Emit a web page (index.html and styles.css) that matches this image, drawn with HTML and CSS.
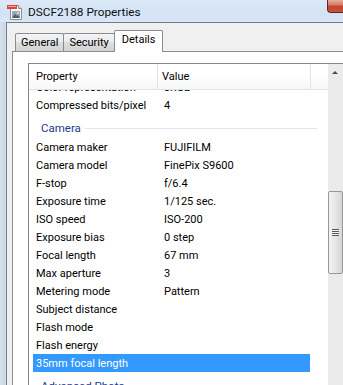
FILE: index.html
```html
<!DOCTYPE html>
<html>
<head>
<meta charset="utf-8">
<link rel="stylesheet" href="styles.css">
</head>
<body>
<div class="window">
  <div class="titlebar">
    <svg class="app-icon" width="16" height="16" viewBox="0 0 16 16">
      <path d="M3.5 1.5h8l3 3v11h-11z" fill="#fafafa" stroke="#8c8c8c"/>
      <path d="M11.5 1.5v3h3" fill="#e6e6e6" stroke="#8c8c8c"/>
      <rect x="0" y="1" width="10" height="4" fill="#d9463c"/>
      <rect x="1" y="2" width="8" height="1" fill="#f4a29a"/>
      <rect x="5" y="7" width="8" height="7" fill="#9aa6b2"/>
      <path d="M5 14l3-4 2 2 1-1 2 3z" fill="#4f5f6f"/>
      <circle cx="11" cy="9" r="1" fill="#e8e8e8"/>
    </svg>
    <span class="title">DSCF2188 Properties</span>
    <div class="close"></div>
  </div>
  <div class="frame">
    <div class="client">
      <div class="tabs">
        <div class="tab">General</div>
        <div class="tab">Security</div>
        <div class="tab active">Details</div>
      </div>
      <div class="panel">
        <div class="listview">
          <div class="lv-main">
            <div class="lv-header">
              <div class="hcell col-prop">Property</div>
              <div class="hcell col-val">Value</div>
              <div class="hcell col-rest"></div>
            </div>
            <div class="lv-body">
              <div class="lv-rows">
                <div class="row"><span class="c1">Color representation</span><span class="c2">sRGB</span></div>
                <div class="row"><span class="c1">Compressed bits/pixel</span><span class="c2">4</span></div>
                <div class="group"><span class="group-name">Camera</span><span class="group-line"></span></div>
                <div class="row"><span class="c1">Camera maker</span><span class="c2">FUJIFILM</span></div>
                <div class="row"><span class="c1">Camera model</span><span class="c2">FinePix S9600</span></div>
                <div class="row"><span class="c1">F-stop</span><span class="c2">f/6.4</span></div>
                <div class="row"><span class="c1">Exposure time</span><span class="c2">1/125 sec.</span></div>
                <div class="row"><span class="c1">ISO speed</span><span class="c2">ISO-200</span></div>
                <div class="row"><span class="c1">Exposure bias</span><span class="c2">0 step</span></div>
                <div class="row"><span class="c1">Focal length</span><span class="c2">67 mm</span></div>
                <div class="row"><span class="c1">Max aperture</span><span class="c2">3</span></div>
                <div class="row"><span class="c1">Metering mode</span><span class="c2">Pattern</span></div>
                <div class="row"><span class="c1">Subject distance</span><span class="c2"></span></div>
                <div class="row"><span class="c1">Flash mode</span><span class="c2"></span></div>
                <div class="row"><span class="c1">Flash energy</span><span class="c2"></span></div>
                <div class="row selected"><span class="c1">35mm focal length</span><span class="c2"></span></div>
                <div class="group"><span class="group-name">Advanced Photo</span><span class="group-line"></span></div>
              </div>
            </div>
          </div>
          <div class="scrollbar">
            <div class="sb-up"><span class="sb-arrow"></span></div>
            <div class="sb-thumb"><span class="grip"></span></div>
          </div>
        </div>
      </div>
    </div>
  </div>
</div>
</body>
</html>
```

FILE: styles.css
```css
html, body {
  margin: 0;
  padding: 0;
}
body {
  width: 343px;
  height: 385px;
  overflow: hidden;
  font-family: Roboto, "Liberation Sans", sans-serif;
  font-size: 11px;
  color: #000;
  background: #fff;
}
.window {
  width: 360px;
  height: 385px;
  display: flex;
  flex-direction: column;
  background: linear-gradient(90deg, #d6e1ec 0, #cad7e4 4px, #d4dfea 6px);
}
.titlebar {
  height: 22px;
  flex: none;
  display: flex;
  align-items: center;
  padding-left: 7px;
  background: linear-gradient(180deg, #dce9f7 0%, #d3e3f5 60%, #d9e7f6 100%);
}
.app-icon {
  flex: none;
  margin-top: 1px;
}
.title {
  margin-left: 5px;
  font-size: 11.8px;
  color: #111;
  padding-top: 1px;
}
.close {
  margin-left: auto;
  margin-right: 17px;
  align-self: flex-start;
  width: 15px;
  height: 12px;
  border-left: 1px solid #5a2a20;
  border-bottom: 1px solid #5a2a20;
  border-bottom-left-radius: 4px;
  background: linear-gradient(180deg, #e8b0a2 0%, #d77a64 40%, #c3442c 55%, #c8553a 100%);
}
.frame {
  flex: 1;
  display: flex;
  padding-left: 6px;
}
.client {
  flex: 1;
  background: #f0f0f0;
  border-left: 1px solid #6f7e8d;
  border-top: 1px solid #6f7e8d;
  padding: 7px 0 0 5px;
  display: flex;
  flex-direction: column;
}
.tabs {
  display: flex;
  align-items: flex-end;
  height: 21px;
  padding-left: 3px;
}
.tab {
  height: 17px;
  line-height: 17px;
  padding: 0 5px;
  border: 1px solid #898c95;
  border-bottom: none;
  margin-right: -1px;
  background: linear-gradient(180deg, #f4f4f4 0%, #ebebeb 50%, #dedede 50%, #d2d2d2 100%);
  border-radius: 2px 2px 0 0;
}
.tab.active {
  height: 21px;
  line-height: 18px;
  margin-bottom: -1px;
  background: #fff;
  position: relative;
  z-index: 1;
  padding: 0 7px;
}
.panel {
  flex: 1;
  background: #fff;
  border-top: 1px solid #898c95;
  border-left: 1px solid #898c95;
  padding: 11px 0 0 15px;
}
.listview {
  width: 316px;
  height: 400px;
  border: 1px solid #828790;
  display: flex;
}
.lv-main {
  width: 299px;
  display: flex;
  flex-direction: column;
}
.lv-header {
  height: 25px;
  flex: none;
  display: flex;
  background: linear-gradient(180deg, #ffffff 0%, #ffffff 45%, #f5f7f9 100%);
  border-bottom: 1px solid #e3e5e8;
}
.hcell {
  display: flex;
  align-items: center;
  border-right: 1px solid #e1e3e7;
}
.col-prop {
  width: 121px;
  padding-left: 7px;
}
.col-val {
  width: 148px;
  padding-left: 4px;
}
.col-rest {
  flex: 1;
  border-right: none;
}
.lv-body {
  flex: 1;
  overflow: hidden;
}
.lv-rows {
  margin-top: -12px;
}
.row {
  height: 18px;
  margin-left: 4px;
  width: 277px;
  display: grid;
  grid-template-columns: 124px 153px;
  align-items: center;
}
.c1 {
  padding-left: 3px;
  white-space: nowrap;
}
.c2 {
  padding-left: 7px;
  white-space: nowrap;
}
.row.selected {
  background: #3399ff;
  color: #fff;
}
.group {
  height: 20px;
  padding-top: 4px;
  margin-left: 4px;
  width: 276px;
  padding-left: 8px;
  display: flex;
  align-items: center;
  color: #1e3a8c;
  font-size: 11.5px;
}
.group-line {
  flex: 1;
  height: 1px;
  margin-left: 4px;
  background: #e2e5ea;
}
.scrollbar {
  width: 17px;
  background: #ebebeb;
  display: flex;
  flex-direction: column;
}
.sb-up {
  height: 17px;
  display: flex;
  align-items: center;
  padding-left: 4px;
}
.sb-arrow {
  width: 0;
  height: 0;
  border-left: 3px solid transparent;
  border-right: 3px solid transparent;
  border-bottom: 3px solid #4b4b4b;
}
.sb-thumb {
  margin-top: 110px;
  height: 83px;
  width: 15px;
  border: 1px solid #979797;
  border-radius: 2px;
  background: linear-gradient(90deg, #f3f3f3 0%, #e6e6e6 50%, #d6d6d6 100%);
  display: flex;
  align-items: center;
  padding-left: 3px;
  box-sizing: border-box;
}
.grip {
  width: 7px;
  height: 7px;
  background: repeating-linear-gradient(180deg, #5a5a5a 0 1px, #f4f4f4 1px 2px);
}
```
